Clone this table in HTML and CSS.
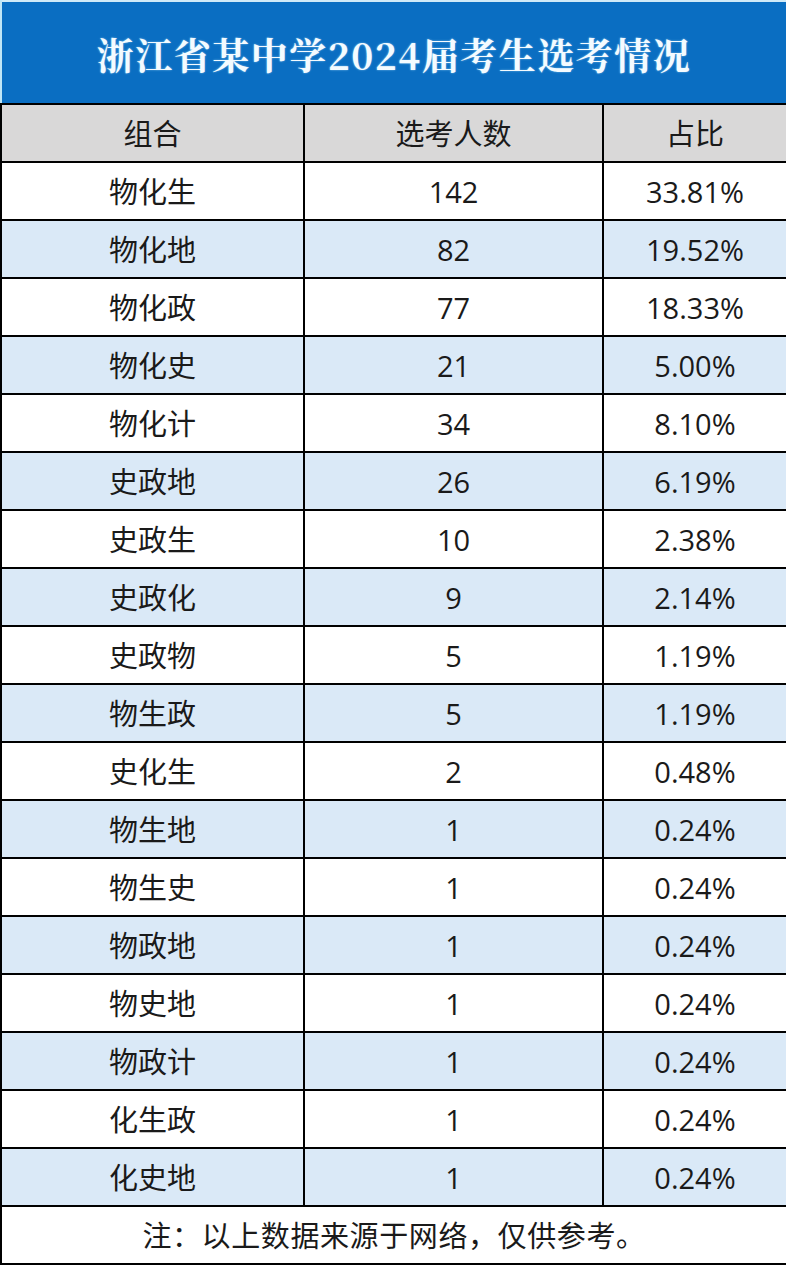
FILE: index.html
```html
<!DOCTYPE html>
<html lang="zh-CN">
<head>
<meta charset="utf-8">
<title>浙江省某中学2024届考生选考情况</title>
<link rel="stylesheet" href="styles.css">
</head>
<body>
<div class="page">
  <div class="title-bar"><h1 class="title">浙江省某中学2024届考生选考情况</h1></div>
  <div class="grid">
    <div class="cell head">组合</div><div class="cell head">选考人数</div><div class="cell head">占比</div>
    <div class="cell">物化生</div><div class="cell num">142</div><div class="cell num">33.81%</div>
    <div class="cell alt">物化地</div><div class="cell alt num">82</div><div class="cell alt num">19.52%</div>
    <div class="cell">物化政</div><div class="cell num">77</div><div class="cell num">18.33%</div>
    <div class="cell alt">物化史</div><div class="cell alt num">21</div><div class="cell alt num">5.00%</div>
    <div class="cell">物化计</div><div class="cell num">34</div><div class="cell num">8.10%</div>
    <div class="cell alt">史政地</div><div class="cell alt num">26</div><div class="cell alt num">6.19%</div>
    <div class="cell">史政生</div><div class="cell num">10</div><div class="cell num">2.38%</div>
    <div class="cell alt">史政化</div><div class="cell alt num">9</div><div class="cell alt num">2.14%</div>
    <div class="cell">史政物</div><div class="cell num">5</div><div class="cell num">1.19%</div>
    <div class="cell alt">物生政</div><div class="cell alt num">5</div><div class="cell alt num">1.19%</div>
    <div class="cell">史化生</div><div class="cell num">2</div><div class="cell num">0.48%</div>
    <div class="cell alt">物生地</div><div class="cell alt num">1</div><div class="cell alt num">0.24%</div>
    <div class="cell">物生史</div><div class="cell num">1</div><div class="cell num">0.24%</div>
    <div class="cell alt">物政地</div><div class="cell alt num">1</div><div class="cell alt num">0.24%</div>
    <div class="cell">物史地</div><div class="cell num">1</div><div class="cell num">0.24%</div>
    <div class="cell alt">物政计</div><div class="cell alt num">1</div><div class="cell alt num">0.24%</div>
    <div class="cell">化生政</div><div class="cell num">1</div><div class="cell num">0.24%</div>
    <div class="cell alt">化史地</div><div class="cell alt num">1</div><div class="cell alt num">0.24%</div>
    <div class="cell note">注：以上数据来源于网络，仅供参考。</div>
  </div>
</div>
</body>
</html>
```
FILE: styles.css
```css
html, body {
  margin: 0;
  padding: 0;
  background: #ffffff;
}

.page {
  width: 792px;
  height: 1266px;
  background: #ffffff;
  font-family: "Open Sans", "Noto Sans CJK SC", sans-serif;
  color: #1a1a1a;
}

.title-bar {
  height: 101px;
  width: 784px;
  margin-left: 2px;
  border-top: 2px solid #cfeaf8;
  background: #0a6ec2;
  box-shadow: -2px 0 0 #bfe6f7;
  display: flex;
  align-items: center;
  justify-content: center;
}

.title {
  margin: 0;
  font-family: "Noto Serif CJK SC", "Liberation Serif", "Noto Sans CJK SC", serif;
  font-weight: 700;
  font-size: 37px;
  letter-spacing: 1.5px;
  color: #f4fbff;
  text-shadow: 0 0 2px rgba(190, 235, 255, 0.7);
  padding-top: 2px;
}

.grid {
  width: 786px;
  box-sizing: border-box;
  padding: 2px;
  border-right: 3px solid #000;
  background: #000;
  display: grid;
  grid-template-columns: 301px 297px 182px;
  grid-auto-rows: 56px;
  gap: 2px;
}

.cell {
  background: #ffffff;
  display: flex;
  align-items: center;
  justify-content: center;
  font-size: 29px;
  line-height: 1;
  font-family: "Open Sans", "Noto Sans CJK SC", sans-serif;
}

.cell.head {
  background: #d9d8d8;
}

.cell.alt {
  background: #dae9f7;
}

.cell.num {
  padding-top: 1px;
}

.cell.note {
  grid-column: 1 / -1;
  font-size: 29px;
  letter-spacing: 0.6px;
}
```
